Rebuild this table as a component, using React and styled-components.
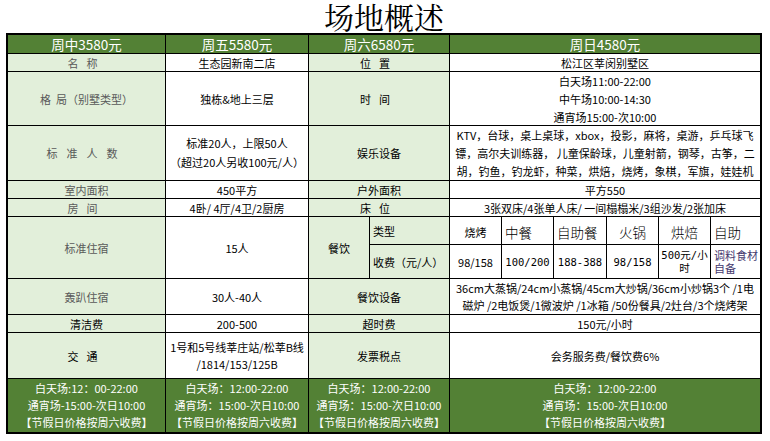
import React from "react";
import styled, { createGlobalStyle } from "styled-components";

const Global = createGlobalStyle`
  html, body { margin: 0; padding: 0; background: #fff; }
  body { font-family: "Noto Sans CJK SC", "Noto Sans", sans-serif; }
`;

const Page = styled.div`
  width: 770px;
  padding: 0 0 0 6px;
  box-sizing: border-box;
`;

const Title = styled.h1`
  margin: 0;
  width: 756px;
  height: 33px;
  line-height: 33px;
  text-align: center;
  font-family: "Noto Serif CJK SC", "Noto Sans CJK SC", serif;
  font-weight: 400;
  font-size: 30px;
  color: #000;
`;

const Sheet = styled.div`
  display: grid;
  width: 756px;
  box-sizing: border-box;
  padding: 2px;
  gap: 1px;
  background: #000;
  grid-template-columns: 157px 142px 60px 79px 51px 51px 52px 51px 51px 49px;
  grid-template-rows: 18px 17px 53px 54px 17px 17px 27px 33px 35px 17px 45px 53px;
  font-family: "Noto Sans CJK SC", "Noto Sans", sans-serif;
  font-size: 11px;
`;

const palette = {
  head: { bg: "#538135", fg: "#fff" },
  label: { bg: "#e2efda", fg: "#000" },
  grey: { bg: "#e2efda", fg: "#595959" },
  value: { bg: "#fff", fg: "#000" },
};

const Cell = styled.div`
  grid-column: span ${(p) => p.$cols || 1};
  grid-row: span ${(p) => p.$rows || 1};
  display: flex;
  align-items: center;
  justify-content: ${(p) => (p.$align === "left" ? "flex-start" : "center")};
  text-align: ${(p) => p.$align || "center"};
  padding: ${(p) => (p.$align === "left" ? "0 2px 0 3px" : "0 1px")};
  background: ${(p) => palette[p.$kind || "value"].bg};
  color: ${(p) => palette[p.$kind || "value"].fg};
  line-height: ${(p) => p.$lh || 18}px;
  letter-spacing: ${(p) => p.$ls || 0}px;
  white-space: nowrap;
  overflow: hidden;
`;

const HeadCell = styled(Cell)`
  font-size: 13.5px;
`;

const FootCell = styled(Cell)`
  line-height: 17px;
`;

const MealType = styled(Cell)`
  font-size: ${(p) => (p.$small ? 11 : 13.5)}px;
  font-weight: ${(p) => (p.$small ? 400 : 300)};
  padding: ${(p) => (p.$align === "left" ? "3px 0 0 3px" : "2px 0 0")};
`;

const Fee = styled(Cell)`
  font-family: ${(p) =>
    p.$mono
      ? '"DejaVu Sans Mono", "Noto Sans CJK SC", monospace'
      : '"Noto Sans CJK SC", sans-serif'};
  font-size: ${(p) => (p.$mono ? 10.5 : 11)}px;
  color: ${(p) => p.$tint || "#000"};
  padding: ${(p) => (p.$align === "left" ? "0 0 0 3px" : "0 1px")};
  white-space: normal;
`;

const Lines = ({ items }) => (
  <span>
    {items.map((t, i) => (
      <React.Fragment key={i}>
        {i > 0 && <br />}
        {t}
      </React.Fragment>
    ))}
  </span>
);

const footLines = [
  "白天场：12:00-22:00",
  "通宵场：15:00-次日10:00",
  "【节假日价格按周六收费】",
];

export default function App() {
  return (
    <Page>
      <Global />
      <Title>场地概述</Title>
      <Sheet>
        <HeadCell $kind="head">周中3580元</HeadCell>
        <HeadCell $kind="head">周五5580元</HeadCell>
        <HeadCell $kind="head" $cols={2}>周六6580元</HeadCell>
        <HeadCell $kind="head" $cols={6}>周日4580元</HeadCell>

        <Cell $kind="grey" $ls={8}>名称</Cell>
        <Cell>生态园新南二店</Cell>
        <Cell $kind="label" $cols={2} $ls={8}>位置</Cell>
        <Cell $cols={6}>松江区莘闵别墅区</Cell>

        <Cell $kind="grey">格&nbsp;&nbsp;局（别墅类型）</Cell>
        <Cell>独栋&amp;地上三层</Cell>
        <Cell $kind="label" $cols={2} $ls={8}>时间</Cell>
        <Cell $cols={6}>
          <Lines items={["白天场11:00-22:00", "中午场10:00-14:30", "通宵场15:00-次10:00"]} />
        </Cell>

        <Cell $kind="grey" $ls={9}>标准人数</Cell>
        <Cell $lh={19}>
          <Lines items={["标准20人，上限50人", "（超过20人另收100元/人）"]} />
        </Cell>
        <Cell $kind="label" $cols={2}>娱乐设备</Cell>
        <Cell $cols={6}>
          <Lines
            items={[
              "KTV，台球，桌上桌球，xbox，投影，麻将，桌游，乒乓球飞",
              "镖，高尔夫训练器， 儿童保龄球，儿童射箭，钢琴，古筝，二",
              "胡，钓鱼，钓龙虾，种菜，烘焙，烧烤，象棋，军旗，娃娃机",
            ]}
          />
        </Cell>

        <Cell $kind="grey">室内面积</Cell>
        <Cell>450平方</Cell>
        <Cell $kind="label" $cols={2}>户外面积</Cell>
        <Cell $cols={6}>平方550</Cell>

        <Cell $kind="grey" $ls={8}>房间</Cell>
        <Cell>4卧/ 4厅/4卫/2厨房</Cell>
        <Cell $kind="label" $cols={2} $ls={8}>床位</Cell>
        <Cell $cols={6}>3张双床/4张单人床/ 一间榻榻米/3组沙发/2张加床</Cell>

        <Cell $kind="grey" $rows={2}>标准住宿</Cell>
        <Cell $rows={2}>15人</Cell>
        <Cell $kind="label" $rows={2}>餐饮</Cell>
        <Cell $kind="label" $align="left">类型</Cell>
        <MealType $small>烧烤</MealType>
        <MealType $align="left">中餐</MealType>
        <MealType $align="left">自助餐</MealType>
        <MealType>火锅</MealType>
        <MealType>烘焙</MealType>
        <MealType $align="left">自助</MealType>

        <Cell $kind="label" $align="left">收费（元/人）</Cell>
        <Fee>98/158</Fee>
        <Fee $mono>100/200</Fee>
        <Fee $mono>188-388</Fee>
        <Fee $mono>98/158</Fee>
        <Fee $mono $lh={13}>500元/小时</Fee>
        <Fee $align="left" $lh={13} $tint="#45396e">调料食材自备</Fee>

        <Cell $kind="grey">轰趴住宿</Cell>
        <Cell>30人-40人</Cell>
        <Cell $kind="label" $cols={2}>餐饮设备</Cell>
        <Cell $cols={6} $lh={17}>
          <Lines
            items={[
              "36cm大蒸锅/24cm小蒸锅/45cm大炒锅/36cm小炒锅3个 /1电",
              "磁炉 /2电饭煲/1微波炉 /1冰箱 /50份餐具/2灶台/3个烧烤架",
            ]}
          />
        </Cell>

        <Cell $kind="label">清洁费</Cell>
        <Cell>200-500</Cell>
        <Cell $kind="label" $cols={2}>超时费</Cell>
        <Cell $cols={6}>150元/小时</Cell>

        <Cell $kind="label" $ls={8}>交通</Cell>
        <Cell $lh={17}>
          <Lines items={["1号和5号线莘庄站/松莘B线", "/1814/153/125B"]} />
        </Cell>
        <Cell $kind="label" $cols={2}>发票税点</Cell>
        <Cell $cols={6}>会务服务费/餐饮费6%</Cell>

        <FootCell $kind="head">
          <Lines items={["白天场:12：00-22:00", "通宵场-15:00-次日10:00", "【节假日价格按周六收费】"]} />
        </FootCell>
        <FootCell $kind="head">
          <Lines items={footLines} />
        </FootCell>
        <FootCell $kind="head" $cols={2}>
          <Lines items={footLines} />
        </FootCell>
        <FootCell $kind="head" $cols={6}>
          <Lines items={footLines} />
        </FootCell>
      </Sheet>
    </Page>
  );
}
